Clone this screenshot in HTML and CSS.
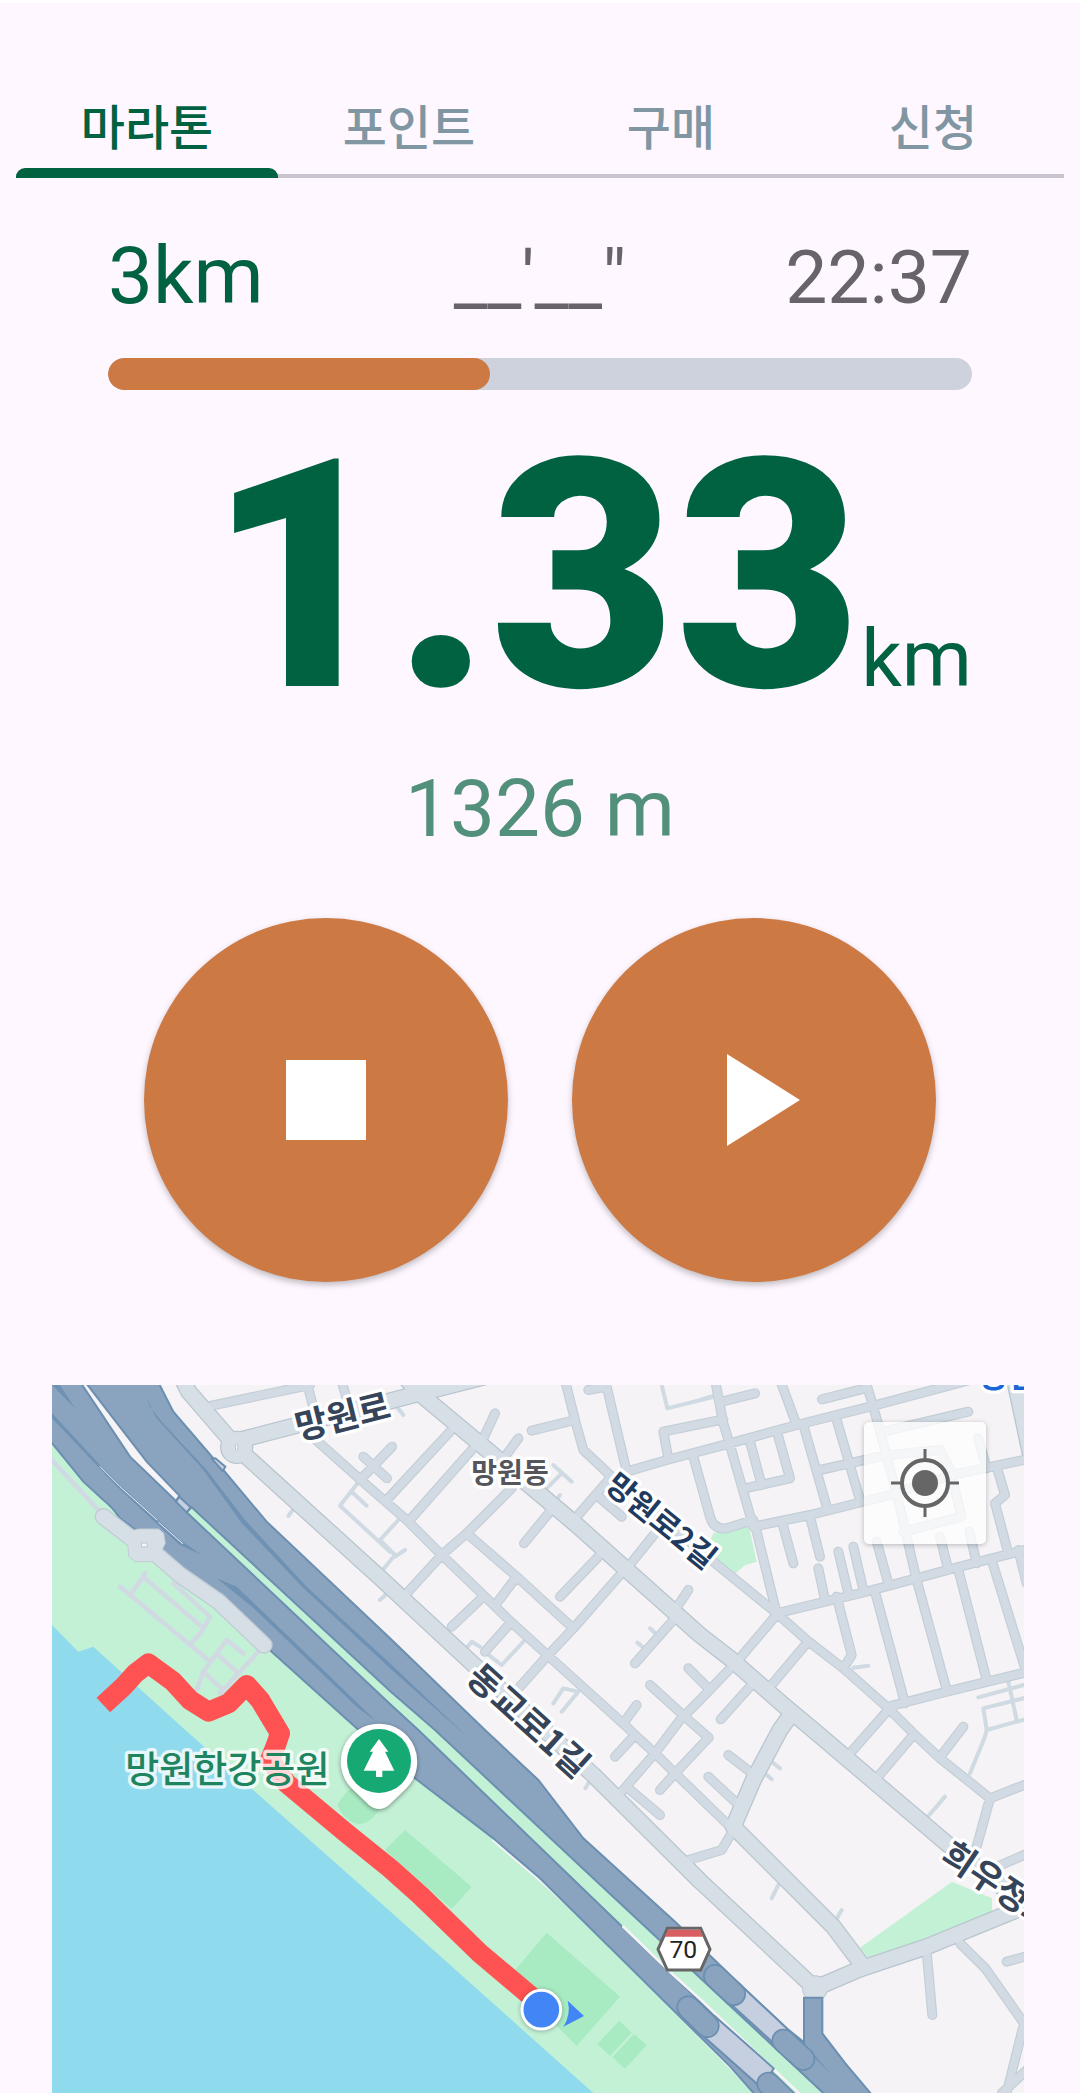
FILE: index.html
```html
<!DOCTYPE html>
<html lang="ko">
<head>
    <meta charset="UTF-8">
    <meta name="viewport" content="width=device-width, initial-scale=1.0">
    <title>마라톤</title>
    <link rel="stylesheet" href="styles.css">
</head>
<body>
    <nav class="tabs">
        <a href="#marathon" class="tab selected">마라톤</a>
        <a href="#point" class="tab">포인트</a>
        <a href="#purchase" class="tab">구매</a>
        <a href="#apply" class="tab">신청</a>
    </nav>

    <main id="marathon">
        <section class="record">
            <div class="stats">
                <label class="goal" for="distance">3km</label>
                <span class="pace">__'__"</span>
                <span class="time">22:37</span>
            </div>
            <progress id="distance" class="distance-bar" value="1326" max="3000"></progress>
            <p class="distance">1.33<span class="unit">km</span></p>
            <p class="meters">1326 m</p>
            <div class="controls">
                <button type="button" class="round-button" aria-label="정지">
                    <svg class="round-icon" viewBox="0 0 120 120"><rect x="20" y="20" width="80" height="80"/></svg>
                </button>
                <button type="button" class="round-button" aria-label="시작">
                    <svg class="round-icon" viewBox="0 0 120 120"><path d="M33 14V106L106 60Z"/></svg>
                </button>
            </div>
        </section>

        <section class="map">
            <svg class="map-canvas" viewBox="0 0 2916 2124">
                <defs>
                    <path id="streets" d="M464 65L774 0M764 -10L800 130M869 -10L890 60M764 140L930 288L1064 405L1169 510L1294 630L1374 708L1484 808L1724 1025L1749 1050L1809 1105L1869 1165L2029 1320
                        M934 215L1005 280M1020 185L924 285M1194 140L1004 345M1259 195L1069 410M1329 85L1294 160M1399 160L1359 215
                        M1379 310L1244 445L1169 510L1064 625M1244 445L1394 575L1564 730M1394 575L1334 655M1294 635L1199 725M1374 715L1299 800
                        M1494 380L1416 475M1639 515L1524 635M1704 570L1564 730L1484 815L1404 905M1574 395L1674 280M1639 335L1709 395M1809 445L1729 545
                        M1540 -10L1569 105L1594 195L1674 270L1984 530L2174 685L2264 765L2374 850L2509 970L2584 1045L2664 1120L2814 1240L2930 1195
                        M1569 105L1439 137M1609 15L1664 5L1724 260L1844 225L2034 175L2234 120L2454 65L2754 -15M1849 220L1834 140L2014 103
                        M1664 5L1660 -10M1990 -10L2014 115L2034 180L2094 390L2114 440L2174 685M1924 215L1974 395Q1985 435 2024 430L2104 405M2109 25L2009 50
                        M2186 -10L2234 120M2310 43L2440 10M2441 -10L2464 65L2534 325L2594 585L2684 915M2254 120L2324 365M2094 170L2129 300M2079 310L2214 280L2179 155
                        M2354 105L2424 345M2304 255L2494 212L2664 195L2700 265M2514 330L2709 268L2930 222M2704 295L2729 395L2554 440M2104 425L2274 390L2514 330
                        M2194 425L2224 535M2274 395L2304 515M2299 550L2319 645M2359 500L2389 625M2404 485L2434 615M2474 470L2509 595M2664 455L2689 555M2752 440L2774 535
                        M2174 685L2444 620L2724 545L2930 492M2494 140L2749 80M2779 160L2804 250M2834 245L2859 330L2829 355L2869 505
                        M2354 635L2399 810L2374 850M2469 620L2559 955M2719 555L2804 885M2819 525L2924 865M2899 495L2924 595M2509 965L2684 920L2930 860
                        M2169 695L2059 825L1944 945L1884 1005L1809 1105L1709 1220M2264 775L2154 905M2094 905L2006 1003M1909 850L1974 915
                        M1794 900L1904 1000L1970 1058L1869 1165L1824 1215M1754 960L1714 1015M1864 705L1749 835M1909 615L1879 660
                        M1749 1050L1689 1115M1729 1210L1824 1290M1969 1175L2049 1250M2029 1110L2094 1160M1909 1425L2009 1395L2044 1335
                        M2504 980L2394 1105M2584 1050L2474 1180M2734 1025L2669 1110M2814 1240L2774 1385M2930 1404L2824 1450
                        M2930 1712L2864 1730M2624 1700L2641 1890M2724 1675L2800 1750L2916 1915L2864 2124M2930 2050L2850 2124"/>
                    <path id="avenues" d="M390 -20L410 20L544 175L584 215L984 578L1264 838L1624 1170L1944 1488L2289 1810M564 165L1064 35L1300 -25M1070 -10L1114 35L1294 185L1574 420L1714 545L1944 750L2034 820L2194 960L2284 1035L2684 1375L2930 1570
                        M2209 1000L2184 1035L2104 1185L2044 1325M2044 1325L2344 1625L2434 1745M2289 1810L2424 1752L2624 1685L2930 1560M2889 -10L2935 205"/>
                    <path id="plaza" d="M154 395L264 480M280 480L384 570L500 650L636 780"/>
                    <g id="tunnel-ends">
                        <path d="M1989 1773L2046 1827"/>
                        <path d="M2194 1967L2254 2022"/>
                        <path d="M1909 1867L1967 1923"/>
                        <path d="M2149 2096L2209 2154"/>
                    </g>
                </defs>

                <rect class="land" width="2916" height="2124"/>

                <!-- river and park -->
                <path class="park" d="M0 100L0 2124H2130L1324 1340L800 800L200 300Z"/>
                <path class="park" d="M1984 445L2014 435L2090 420L2114 530L2080 540L2050 565L1960 500Z"/>
                <path class="park" d="M2424 1688L2700 1490L2820 1540V1580L2454 1725Z"/>
                <path class="water" d="M0 720L79 800L124 785L400 1035L984 1552L1624 2124H0Z"/>
                <path class="lawn" d="M856 1260Q880 1215 924 1190L990 1260Q960 1315 924 1317Q880 1315 856 1260ZM1059 1335L1259 1505L1199 1572L999 1395ZM1484 1643L1704 1835L1574 1982L1369 1780ZM1702 1907L1739 1943L1674 2013L1636 1977ZM1746 1947L1784 1980L1719 2052L1681 2017Z"/>

                <!-- streets -->
                <path class="alley" d="M924 285L864 362L1014 500M899 320L944 362M722 375L709 393M984 645L1000 630M1034 65L1054 90M1504 240L1559 290M1529 265L1484 310M1524 330L1514 345
                    M1039 405L984 465L1029 510L984 565M1059 495L1029 515M1239 795L1259 770L1284 785M1419 765L1349 840L1304 805M1504 955L1534 910L1579 920L1529 980
                    M1829 0L1846 70L1994 33M1944 45L1994 30M1794 730L1810 745M1756 773L1775 788M2404 848L2449 842M2779 937L2930 896M2869 890L2894 1005M2930 936L2794 970L2804 1035L2930 1000M2804 1035L2799 1055L2754 1165
                    M2159 1130L2184 1150M2139 1165L2159 1183M2679 1235L2619 1305M2179 1500L2159 1540M2369 1575L2349 1610M1600 1210L1612 1190"/>
                <use href="#streets" class="street-casing"/>
                <use href="#avenues" class="avenue-casing"/>
                <circle class="ring-casing" cx="554" cy="187" r="50"/>
                <circle class="ring-casing" cx="2289" cy="1810" r="39"/>
                <use href="#streets" class="street"/>
                <use href="#avenues" class="avenue"/>
                <circle class="ring" cx="554" cy="187" r="46"/>
                <circle class="ring" cx="2289" cy="1810" r="36"/>
                <ellipse class="ring-hole" cx="554" cy="187" rx="4" ry="10"/>

                <!-- expressway -->
                <path class="verge" d="M1324 1366L1464 1486L1584 1594L2034 2046L2110 2124"/>
                <path class="highway" d="M-10 -10H318L364 80L514 255L644 410L1014 760L1299 1035L1459 1185L1594 1360L1874 1615L2034 1770L2204 1930L2256 1972V1838H2311V1945L2380 2035L2460 2130H2110L2034 2044L1464 1480L1324 1360L1089 1180L914 1030L664 805L300 470L204 400Q180 365 154 345L94 290L-10 162Z"/>
                <path class="link" d="M490 220L520 245L512 258L480 222Z"/>
                <path class="lane" d="M0 0H24L69 70ZM0 85L144 240L204 300L384 465L449 510L380 478L190 300L100 205L0 100ZM284 35L294 65L329 110L464 255L579 405L764 605L1014 835L1250 1060L1014 850L750 605L570 415L450 250L310 95ZM494 580L554 605L824 865L974 1010L914 965L600 665ZM2256 1975L2340 2070L2270 2000Z"/>
                <path class="divider" d="M144 245L204 305L315 405M320 412L392 476"/>
                <path class="island" d="M84 -10H99L284 230L382 332L372 348L234 215Z"/>
                <path class="link" d="M382 335L416 367L404 382L372 350Z"/>
                <path class="median" d="M419 367L1014 918L1149 1035L1594 1452L2034 1862L2320 2130H2230L1944 1850L1099 1035L1014 957L404 382Z"/>
                <path class="verge" d="M1714 1625L1864 1770L1944 1842L2240 2124"/>
                <path class="link" d="M2060 1795L2204 1930L2184 1992L2030 1852Z"/>
                <path class="link" d="M1990 1895L2165 2050L2130 2110L1950 1950Z"/>
                <use href="#tunnel-ends" class="tunnel-casing"/>
                <use href="#tunnel-ends" class="tunnel"/>

                <!-- riverside plaza and paths -->
                <path class="path" d="M-10 215L139 375M204 605L469 825M279 565L239 625M279 580L449 725M364 595L474 695L449 740L414 780M624 795L504 925M434 915L454 860L524 765L574 805M494 805L559 865M454 860L514 915"/>
                <use href="#plaza" class="plaza-casing"/>
                <path class="blob" d="M225 440L260 432L320 432L335 445L340 475L330 495L345 525L300 530L250 530L230 515Z"/>
                <use href="#plaza" class="avenue"/>
                <path class="ring-hole" d="M268 474H286V486H268Z"/>

                <!-- place names -->
                <text class="road-name" x="872" y="132" transform="rotate(-14 872 95)">망원로</text>
                <text class="area-name" x="1374" y="293">망원동</text>
                <text class="lane-name" x="1828" y="441" transform="rotate(39 1828 408)">망원로2길</text>
                <text class="road-name" x="1429" y="1045" transform="rotate(42 1429 1008)">동교로1길</text>
                <text class="road-name" x="2842" y="1540" transform="rotate(34 2842 1503)">희우정로</text>
                <text class="station-name" x="2778" y="5">망원역</text>

                <path class="route" d="M154 960L214 905L250 865L289 835L364 890L414 945L469 980L530 955L584 900L624 945L684 1045L672 1080L654 1125L704 1195L884 1345L1014 1450L1104 1530L1284 1705L1450 1845"/>
                <text class="park-name" x="526" y="1193">망원한강공원</text>

                <g class="pin">
                    <path class="pin-body" d="M981 1016A114 114 0 0 1 1062 1211L1012 1259Q981 1285 950 1259L900 1211A114 114 0 0 1 981 1016Z"/>
                    <circle class="pin-face" cx="981" cy="1128" r="96"/>
                    <path class="pin-tree" d="M981 1062L1009 1100H999L1027 1157H991V1176H972V1157H935L963 1100H953Z"/>
                </g>

                <path class="shield" d="M1846 1630H1946L1974 1693L1946 1755H1846L1818 1693Z"/>
                <path class="shield-top" d="M1848 1634H1944L1953 1655H1839Z"/>
                <text class="shield-number" x="1894" y="1719">70</text>

                <circle class="here" cx="1468" cy="1874" r="58"/>
                <path class="heading" d="M1547 1847L1596 1893L1534 1925Q1558 1888 1547 1847Z"/>
            </svg>
            <button type="button" class="locate" aria-label="내 위치">
                <svg class="locate-icon" viewBox="0 0 68 68">
                    <circle cx="34" cy="34" r="23"/>
                    <path d="M34 0V11M34 57V68M0 34H11M57 34H68"/>
                    <circle class="locate-dot" cx="34" cy="34" r="13"/>
                </svg>
            </button>
        </section>
    </main>
</body>
</html>
```

FILE: styles.css
```css
body {
    margin: 0;
    border-top: 3px solid #ffffff;
    background-color: #fef7ff;
    color: #006241;
    font-family: Roboto, 'Noto Sans CJK KR', sans-serif;
}

/* Tabs */
.tabs {
    display: flex;
    margin: 91px 16px 0;
    box-shadow: inset 0 -4px #cac4d0;
}

.tab {
    flex: 1;
    padding-bottom: 14px;
    color: #8097a3;
    font-size: 48px;
    font-weight: 500;
    line-height: 70px;
    text-align: center;
    text-decoration: none;
    position: relative;
}

.tab.selected {
    color: #006241;
}

.tab.selected::after {
    content: '';
    position: absolute;
    left: 0;
    right: 0;
    bottom: 0;
    height: 10px;
    border-radius: 9px 9px 0 0;
    background-color: #006241;
}

/* Running record */
.record {
    padding: 50px 10% 0;
}

.stats {
    display: grid;
    grid-template-columns: repeat(3, 1fr);
    align-items: baseline;
    line-height: 96px;
}

.goal {
    font-size: 80px;
}

.pace,
.time {
    color: #68636a;
    font-size: 75px;
}

.pace {
    text-align: center;
}

.time {
    text-align: right;
}

.distance-bar {
    display: block;
    width: 100%;
    height: 32px;
    margin-top: 33px;
    border: none;
    border-radius: 16px;
    overflow: hidden;
    appearance: none;
    background-color: #ced2dd;
}

.distance-bar::-webkit-progress-bar {
    background-color: #ced2dd;
}

.distance-bar::-webkit-progress-value {
    border-radius: 16px;
    background-color: #cd7944;
}

.distance {
    margin: 0;
    font-size: 320px;
    font-weight: 900;
    line-height: 374px;
    text-align: right;
    white-space: nowrap;
}

.unit {
    font-size: 80px;
    font-weight: 400;
    line-height: 96px;
}

.meters {
    margin: 0;
    color: #52907b;
    font-size: 80px;
    line-height: 90px;
    text-align: center;
}

.controls {
    display: flex;
    justify-content: center;
    gap: 64px;
    margin-top: 64px;
}

.round-button {
    display: flex;
    justify-content: center;
    align-items: center;
    width: 364px;
    aspect-ratio: 1;
    padding: 0;
    border: none;
    border-radius: 50%;
    background-color: #cd7944;
    box-shadow: 0 3px 6px rgba(0, 0, 0, 0.25);
}

.round-icon {
    width: 120px;
    fill: #ffffff;
}

/* Map */
.map {
    position: relative;
    margin: 103px 56px 0 52px;
}

.map-canvas {
    display: block;
    width: 100%;
}

.land { fill: #f5f3f5; }
.park { fill: #c3f1d6; }
.water { fill: #90daee; }
.lawn { fill: #a8eac2; }

.street, .street-casing, .avenue, .avenue-casing,
.plaza-casing, .alley, .path, .route, .verge, .divider {
    fill: none;
    stroke-linecap: round;
    stroke-linejoin: round;
}

.street { stroke: #d2dbe4; stroke-width: 23; }
.street-casing { stroke: #c3ced6; stroke-width: 30; }
.avenue { stroke: #d7dfe6; stroke-width: 44; }
.avenue-casing { stroke: #bac6cf; stroke-width: 52; }
.plaza-casing { stroke: #c1ccd5; stroke-width: 52; }
.alley { stroke: #cfdae3; stroke-width: 12; }
.path { stroke: #d1dae3; stroke-width: 14; }
.ring, .blob { fill: #d7dfe6; }
.blob { stroke: #c1ccd5; stroke-width: 3; }
.ring-casing { fill: #bac6cf; }
.ring-hole { fill: #f5f3f5; stroke: #bac6cf; stroke-width: 3; }

.highway {
    fill: #8aa3bf;
    stroke: #6b8fb1;
    stroke-width: 6;
}

.lane { fill: #6f91b3; }
.divider { stroke: #eef1f6; stroke-width: 3; }
.verge { stroke: #f5f3f5; stroke-width: 8; }

.island, .median, .link {
    stroke: #6b8fb1;
    stroke-width: 6;
}

.island { fill: #f5f3f5; }
.median { fill: #c3f1d6; }
.link { fill: #c6cfdf; }

.tunnel, .tunnel-casing {
    stroke-linecap: round;
}

.tunnel { stroke: #8aa3bf; stroke-width: 62; }
.tunnel-casing { stroke: #6b8fb1; stroke-width: 72; }

.route {
    stroke: #ff5252;
    stroke-width: 60;
    stroke-linecap: butt;
}

/* Place names */
.map-canvas text {
    font-family: 'Noto Sans CJK KR', sans-serif;
    font-weight: 700;
    text-anchor: middle;
    paint-order: stroke;
    stroke: #ffffff;
    stroke-width: 20;
    stroke-linejoin: round;
}

.map-canvas .road-name { fill: #36445a; font-size: 105px; }
.map-canvas .lane-name { fill: #1f3a5f; font-size: 92px; }
.map-canvas .area-name { fill: #55565b; font-size: 84px; }

.map-canvas .park-name {
    fill: #1f8560;
    font-size: 111px;
    font-weight: 500;
    stroke-opacity: 0.8;
}

.map-canvas .station-name {
    fill: #1a66d6;
    font-size: 100px;
    text-anchor: start;
}

/* Markers */
.pin { filter: drop-shadow(0 4px 6px rgba(0, 0, 0, 0.4)); }
.pin-body, .pin-tree { fill: #ffffff; }
.pin-face { fill: #17a974; }

.shield {
    fill: #ffffff;
    stroke: #666666;
    stroke-width: 9;
}

.shield-top { fill: #d85f61; }

.map-canvas .shield-number {
    fill: #222222;
    font-family: Roboto, sans-serif;
    font-size: 74px;
    font-weight: 400;
    stroke: none;
}

.here {
    fill: #4285f4;
    stroke: #ffffff;
    stroke-width: 9;
    filter: drop-shadow(0 2px 6px rgba(0, 0, 0, 0.3));
}

.heading { fill: #4285f4; }

.locate {
    position: absolute;
    top: 37px;
    right: 38px;
    display: flex;
    justify-content: center;
    align-items: center;
    width: 122px;
    height: 122px;
    padding: 0;
    border: none;
    border-radius: 5px;
    background-color: rgba(255, 255, 255, 0.75);
    box-shadow: 0 1px 5px rgba(0, 0, 0, 0.25);
}

.locate-icon {
    width: 68px;
    fill: none;
    stroke: #666666;
    stroke-width: 4;
}

.locate-icon path { stroke-width: 3; }
.locate-dot { fill: #666666; stroke: none; }
```
